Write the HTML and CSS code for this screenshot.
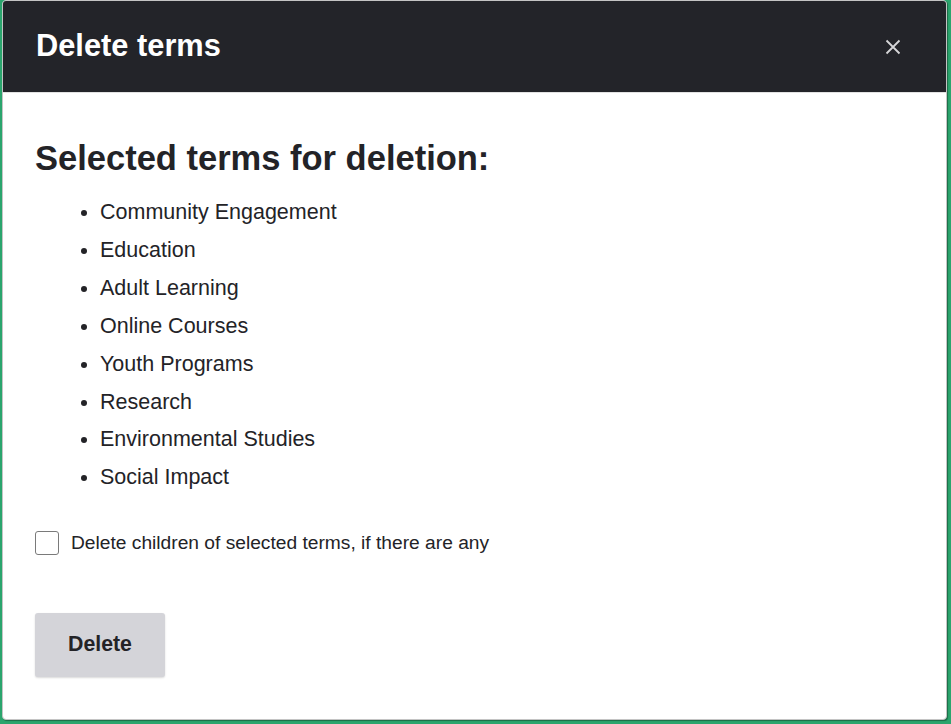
FILE: index.html
```html
<!DOCTYPE html>
<html lang="en">
<head>
<meta charset="utf-8">
<title>Delete terms</title>
<link rel="stylesheet" href="styles.css">
</head>
<body>
<div class="dialog" role="dialog" aria-labelledby="dlg-title">
  <div class="dialog-header">
    <h1 id="dlg-title" class="dialog-title">Delete terms</h1>
    <button class="close-btn" aria-label="Close">
      <svg width="16" height="16" viewBox="0 0 16 16" aria-hidden="true">
        <path d="M1.5 1.5 L14.5 14.5 M14.5 1.5 L1.5 14.5" stroke="#d6d6d8" stroke-width="1.8" stroke-linecap="butt" fill="none"/>
      </svg>
    </button>
  </div>
  <div class="dialog-body">
    <h2 class="section-title">Selected terms for deletion:</h2>
    <ul class="term-list">
      <li>Community Engagement</li>
      <li>Education</li>
      <li>Adult Learning</li>
      <li>Online Courses</li>
      <li>Youth Programs</li>
      <li>Research</li>
      <li>Environmental Studies</li>
      <li>Social Impact</li>
    </ul>
    <label class="check-row">
      <input type="checkbox" class="check">
      <span class="check-label">Delete children of selected terms, if there are any</span>
    </label>
    <div class="actions">
      <button class="btn-delete">Delete</button>
    </div>
  </div>
</div>
</body>
</html>
```

FILE: styles.css
```css
html, body {
  margin: 0;
  padding: 0;
}
body {
  background: #2ba56d;
  font-family: "Liberation Sans", Arial, sans-serif;
  color: #232327;
  width: 951px;
  height: 724px;
  overflow: hidden;
}
.dialog {
  box-sizing: border-box;
  margin-left: 2px;
  width: 945px;
  height: 720px;
  background: #ffffff;
  border: 1px solid #c4c4c4;
  border-radius: 4px;
  box-shadow: 1px 1px 1px rgba(0,0,0,0.35);
  display: flex;
  flex-direction: column;
  overflow: hidden;
}
.dialog-header {
  background: #232429;
  height: 92px;
  flex: none;
  display: flex;
  align-items: center;
  justify-content: space-between;
  padding: 0 45px 0 33px;
  border-bottom: 1px solid #e2e2e2;
  box-sizing: border-box;
}
.dialog-title {
  margin: 0;
  color: #ffffff;
  font-size: 30.8px;
  font-weight: bold;
  line-height: 1;
}
.close-btn {
  background: none;
  border: 0;
  padding: 0;
  width: 16px;
  height: 16px;
  display: flex;
  cursor: pointer;
  margin-top: 1px;
}
.dialog-body {
  padding: 46px 32px 0 32px;
}
.section-title {
  margin: 0;
  font-size: 34.5px;
  font-weight: bold;
  line-height: 39px;
  color: #232327;
}
.term-list {
  margin: 16px 0 0 0;
  padding-left: 65px;
  font-size: 21.5px;
  line-height: 37.9px;
}
.check-row {
  display: flex;
  align-items: center;
  gap: 12px;
  margin-top: 34px;
  font-size: 19.2px;
}
.check {
  appearance: none;
  -webkit-appearance: none;
  margin: 0;
  width: 24px;
  height: 24px;
  border: 1px solid #7a7a7a;
  border-radius: 3px;
  background: #fff;
  box-sizing: border-box;
  flex: none;
}
.actions {
  margin-top: 57.5px;
}
.btn-delete {
  font-family: "Liberation Sans", Arial, sans-serif;
  font-size: 21.3px;
  font-weight: bold;
  color: #232327;
  background: #d4d4d9;
  border: 0;
  border-radius: 3px;
  width: 130px;
  height: 64px;
  box-shadow: 0 1px 2px rgba(0,0,0,0.15);
  padding: 0;
}
```
